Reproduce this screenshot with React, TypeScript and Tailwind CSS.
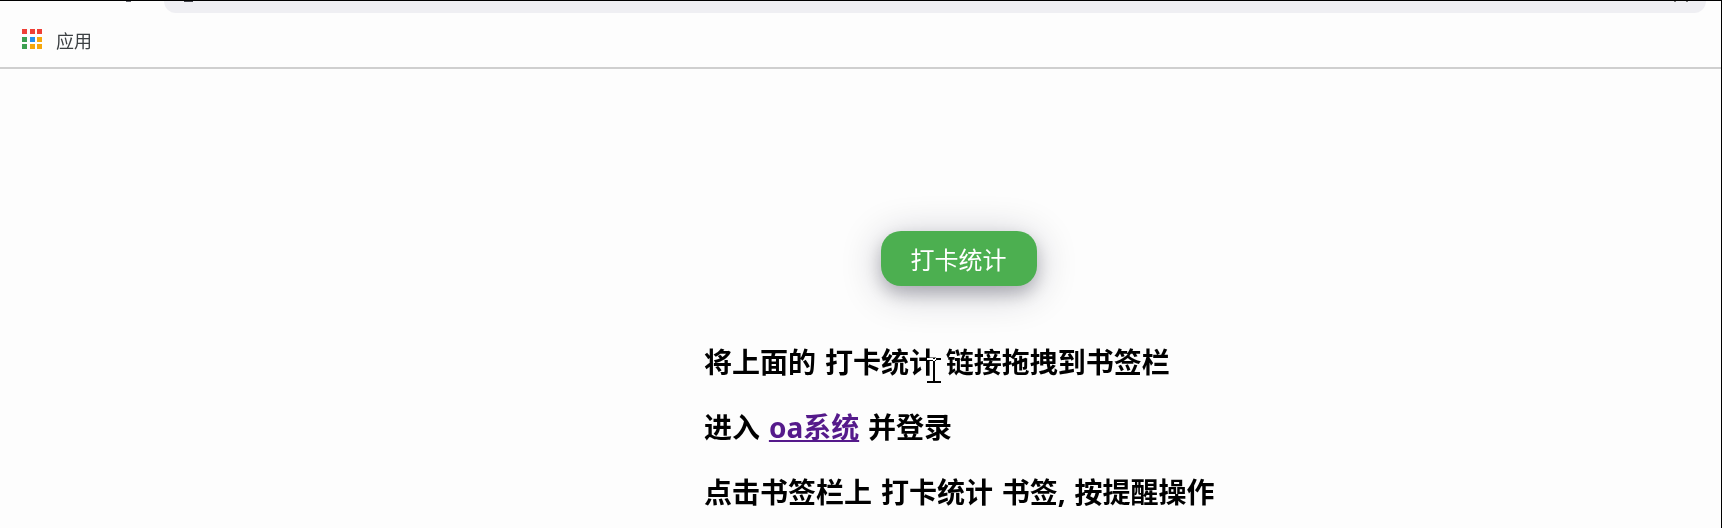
const dots = [
  'bg-[#ef3f36]', 'bg-[#ef3f36]', 'bg-[#ef3f36]',
  'bg-[#3c9f50]', 'bg-[#2490ee]', 'bg-[#f5a80c]',
  'bg-[#3c9f50]', 'bg-[#f5a80c]', 'bg-[#f5a80c]',
];

function BookmarkBar() {
  return (
    <header className="h-[68px] shrink-0 border-b-2 border-[#cfcfcf]">
      <div className="relative ml-[164px] mr-[15px] h-[12px] rounded-b-[12px] bg-[#efeff3]">
        <span className="absolute left-[20px] top-0 h-px w-[9px] bg-[#45464e]" />
        <span className="absolute -left-[38px] top-0 h-px w-[5px] bg-[#65666e]" />
        <span className="absolute right-[30px] top-0 h-px w-[2px] bg-[#777777]" />
        <span className="absolute right-[18px] top-0 h-px w-[2px] bg-[#777777]" />
      </div>
      <div className="flex h-[54px] pl-[22px] pt-[16px]">
        <div className="grid h-[20px] w-[20px] grid-cols-[5px_5px_5px] grid-rows-[5px_5px_5px] content-between justify-between">
          {dots.map((color, i) => (
            <span key={i} className={color} />
          ))}
        </div>
        <span className="ml-[14px] text-[18px] leading-[24px] text-[#3c4043]">应用</span>
      </div>
    </header>
  );
}

function TextCursor() {
  return (
    <svg className="absolute left-[223px] top-[14px] mix-blend-difference" width="14" height="25" viewBox="0 0 14 25" fill="#fff" shapeRendering="crispEdges">
      <path d="M0 0h6v1h2V0h6v2H8v21h6v2H0v-2h6V2H0z" />
    </svg>
  );
}

export default function App() {
  return (
    <div className="flex h-[528px] w-full flex-col overflow-hidden border-r border-t border-black bg-[#fdfdfd] font-['Noto_Sans','Noto_Sans_CJK_SC',sans-serif]">
      <BookmarkBar />
      <main className="flex flex-col pl-[704px]">
        <a className="ml-[177px] mt-[162px] flex h-[55px] w-[156px] items-center justify-center rounded-[20px] bg-[#4caf50] pt-[3px] pr-px text-[24px] leading-[32px] text-white shadow-[0_8px_16px_0_rgba(0,0,20,0.2),0_6px_40px_0_rgba(0,0,40,0.24)]">
          打卡统计
        </a>
        <div className="mt-[58px] flex flex-col gap-[28px] text-[28px] font-bold leading-[37px] text-black [word-spacing:1.6px]">
          <p className="relative whitespace-nowrap">
            将上面的 打卡统计 链接拖拽到书签栏
            <TextCursor />
          </p>
          <p className="whitespace-nowrap">
            进入 <a className="text-[#551a8b] underline decoration-2 underline-offset-[2px] [text-decoration-skip-ink:none]">oa系统</a> 并登录
          </p>
          <p className="whitespace-nowrap">点击书签栏上 打卡统计 书签, 按提醒操作</p>
        </div>
      </main>
    </div>
  );
}
